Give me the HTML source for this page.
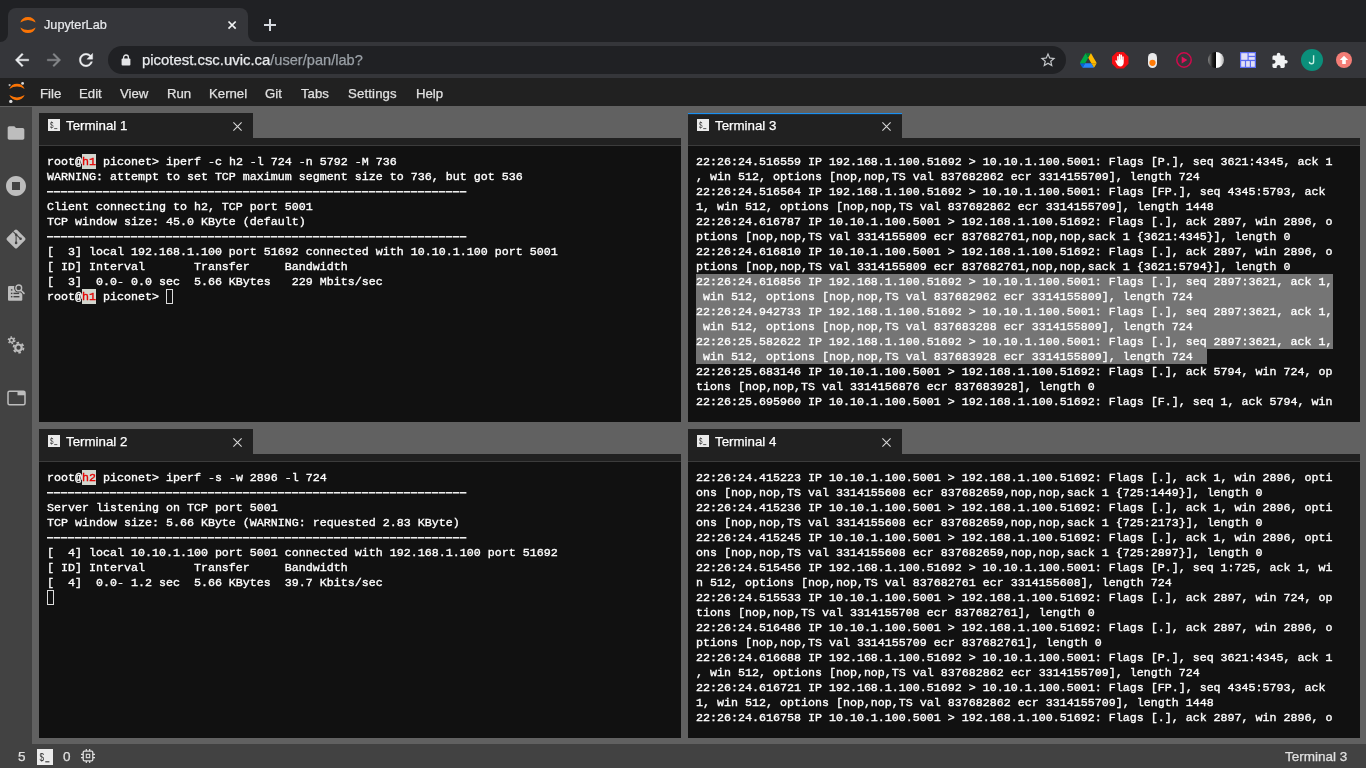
<!DOCTYPE html>
<html><head><meta charset="utf-8"><title>JupyterLab</title>
<style>
*{box-sizing:border-box;margin:0;padding:0}
html,body{width:1366px;height:768px;overflow:hidden;background:#616161;font-family:"Liberation Sans",sans-serif;}
.abs{position:absolute}
#tabstrip{left:0;top:0;width:1366px;height:42px;background:#202124}
#ctab{left:8px;top:8px;width:240px;height:34px;background:#35363a;border-radius:8px 8px 0 0}
#ctab .ttl{left:36px;top:10px;will-change:transform;-webkit-text-stroke:0.200px;font-size:12.700px;color:#e8eaed;white-space:nowrap}
#toolbar{left:0;top:42px;width:1366px;height:36px;background:#35363a}
#omni{left:108px;top:4px;width:958px;height:28px;border-radius:14px;background:#202124}
#url{left:34px;top:6px;will-change:transform;-webkit-text-stroke:0.250px;font-size:14.900px;color:#e8eaed;white-space:nowrap}
#url span{color:#9aa0a6;font-size:14.600px}
#menubar{left:0;top:78px;width:1366px;height:28px;background:#212121}
#menubar .m{top:8px;will-change:transform;-webkit-text-stroke:0.250px;font-size:13.200px;color:#e0e0e0;white-space:nowrap}
#sidebar{left:0;top:107px;width:32px;height:637px;background:#424242}
#status{left:0;top:744px;width:1366px;height:24px;background:#424242;color:#e0e0e0;font-size:13.5px}
.tab{height:25px;width:214px;background:#212121;color:#fff;font-size:13.5px}
.tab .lbl{left:26.500px;top:5px;will-change:transform;-webkit-text-stroke:0.250px;font-size:13.300px;white-space:nowrap}
.strip{height:7px;background:#212121}
.line{height:1px;background:#3c3c3c}
.term{background:#111;color:#fff;font-family:"Liberation Mono",monospace;font-size:11.667px;line-height:15px;overflow:hidden;font-weight:normal;-webkit-text-stroke:0.35px}
.term .in{position:absolute;left:8px;top:8px;will-change:transform}
.r{height:15px;line-height:16px;position:relative;white-space:pre}
.r b{position:relative;font-weight:inherit}
.sel{position:absolute;left:0;top:0;height:15px;background:#757575}
.hl{display:inline-block;height:15px;vertical-align:top;background:#d3d7cf;color:#e40000}
.cur{display:inline-block;width:7px;height:15px;border:1px solid #dcdcdc;vertical-align:top}

svg{position:absolute;overflow:visible}
.dash{position:absolute;left:0;top:7px;width:420px;height:2px;background:repeating-linear-gradient(90deg,rgba(17,17,17,0) 0,rgba(17,17,17,0) 6px,rgba(17,17,17,.6) 6px,rgba(17,17,17,.6) 7px),linear-gradient(#efefef 0,#efefef 50%,#909090 50%,#909090 100%)}
.st{will-change:transform;-webkit-text-stroke:0.250px;white-space:nowrap}
.gs{will-change:transform}
</style></head><body>
<div id="tabstrip" class="abs">
  <div id="ctab" class="abs">
    <svg style="left:12px;top:8.900px" width="16" height="16" viewBox="-8 -8 16 16"><path d="M-7.700,-2.400 A8.140,8.140 0 0 1 7.700,-2.400 A14.040,14.040 0 0 0 -7.700,-2.400Z" fill="#fa7405"/><path d="M-7.700,2.400 A8.140,8.140 0 0 0 7.700,2.400 A14.040,14.040 0 0 1 -7.700,2.400Z" fill="#fa7405"/></svg>
    <div class="ttl abs">JupyterLab</div>
    <svg style="left:219.900px;top:12.800px" width="8.200" height="8.200" viewBox="0 0 8.200 8.200"><path d="M0.500,0.500 L7.700,7.700 M7.700,0.500 L0.500,7.700" stroke="#f1f3f4" stroke-width="1.700" fill="none"/></svg>
  </div>
  <svg style="left:263.900px;top:18.900px" width="12" height="12" viewBox="0 0 12 12"><path d="M6,0V12M0,6H12" stroke="#d6dae0" stroke-width="2" fill="none"/></svg>
  <div class="abs" style="left:0;top:34px;width:8px;height:8px;background:#35363a"></div>
  <div class="abs" style="left:0;top:26px;width:8px;height:16px;background:#202124;border-radius:0 0 8px 0"></div>
  <div class="abs" style="left:248px;top:34px;width:8px;height:8px;background:#35363a"></div>
  <div class="abs" style="left:248px;top:26px;width:8px;height:16px;background:#202124;border-radius:0 0 0 8px"></div>
</div>
<div id="toolbar" class="abs">
  <svg style="left:12px;top:8px" width="20" height="20" viewBox="0 0 24 24"><path d="M20 11H7.83l5.59-5.59L12 4l-8 8 8 8 1.41-1.41L7.83 13H20v-2z" fill="#eceef0" stroke="#eceef0" stroke-width="0.500"/></svg>
  <svg style="left:44px;top:8px" width="20" height="20" viewBox="0 0 24 24"><path d="M12 4l-1.41 1.41L16.17 11H4v2h12.17l-5.58 5.59L12 20l8-8z" fill="#85878a" stroke="#85878a" stroke-width="0.500"/></svg>
  <svg style="left:76px;top:8px" width="20" height="20" viewBox="0 0 24 24"><path d="M17.65 6.35C16.2 4.9 14.21 4 12 4c-4.42 0-7.99 3.58-7.99 8s3.57 8 7.99 8c3.73 0 6.84-2.55 7.73-6h-2.08c-.82 2.33-3.04 4-5.65 4-3.31 0-6-2.69-6-6s2.69-6 6-6c1.66 0 3.14.69 4.22 1.78L13 11h7V4l-2.35 2.35z" fill="#eceef0" stroke="#eceef0" stroke-width="0.400"/></svg>
  <div id="omni" class="abs">
    <svg style="left:13px;top:8px" width="10" height="12" viewBox="0 0 10 12"><rect x="0.6" y="4.6" width="8.8" height="6.8" rx="1" fill="#e4e5e7"/><path d="M2.6,5V3.4a2.4,2.4 0 0 1 4.8,0V5" stroke="#e4e5e7" stroke-width="1.3" fill="none"/></svg>
    <div id="url" class="abs">picotest.csc.uvic.ca<span>/user/pan/lab?</span></div>
    <svg style="left:931px;top:5px" width="18" height="18" viewBox="0 0 24 24"><path d="M22 9.24l-7.19-.62L12 2 9.19 8.63 2 9.24l5.46 4.73L5.82 21 12 17.27 18.18 21l-1.63-7.03L22 9.24zM12 15.4l-3.76 2.27 1-4.28-3.32-2.88 4.38-.38L12 6.1l1.71 4.04 4.38.38-3.32 2.88 1 4.28L12 15.4z" fill="#c4c7ca"/></svg>
  </div>
  <!-- drive -->
  <svg style="left:1080px;top:10.5px" width="16.5" height="15" viewBox="0 0 87.3 78"><path d="M6.6 66.85l3.85 6.65c.8 1.4 1.95 2.5 3.3 3.3l13.75-23.8H0c0 1.55.4 3.1 1.2 4.5z" fill="#0066da"/><path d="M43.65 25L29.9 1.2c-1.35.8-2.5 1.9-3.3 3.3L1.2 48.5C.4 49.9 0 51.450 0 53h27.500z" fill="#00ac47"/><path d="M73.55 76.8c1.35-.8 2.5-1.900 3.3-3.3l1.6-2.75 7.65-13.25c.8-1.4 1.2-2.950 1.2-4.500H59.798l5.852 11.500z" fill="#f2b200"/><path d="M43.65 25L57.4 1.2C56.050.4 54.500 0 52.900 0H34.400c-1.600 0-3.150.45-4.500 1.200z" fill="#00832d"/><path d="M59.800 53H27.500L13.750 76.800c1.350.8 2.900 1.200 4.500 1.200h50.800c1.600 0 3.150-.45 4.500-1.200z" fill="#2684fc"/><path d="M73.400 26.500L60.700 4.500c-.8-1.400-1.950-2.500-3.300-3.300L43.650 25 59.800 53h27.450c0-1.550-.4-3.100-1.200-4.500z" fill="#ffba00"/></svg>
  <!-- adblock -->
  <svg style="left:1112px;top:10px" width="16.5" height="16.5" viewBox="0 0 24 24"><path d="M7.03,0 H16.97 L24,7.03 V16.97 L16.970,24 H7.03 L0,16.97 V7.03Z" fill="#f40d12"/><path d="M8.200,13.8 V7.6 a0.9,0.9 0 0 1 1.800,0 V11 h0.3 V5.400 a0.9,0.9 0 0 1 1.800,0 V11 h0.3 V6 a0.9,0.9 0 0 1 1.800,0 V11.500 h0.3 V8 a0.9,0.9 0 0 1 1.800,0 V14.500 c0,3.200 -1.700,5.200 -4.200,5.200 c-2.200,0 -3.300,-1.200 -4.300,-3 L6,13.300 c-0.500,-1 0.800,-1.800 1.500,-0.900Z" fill="#fff" transform="translate(12 12.500) scale(1.180) translate(-12 -12.500)"/></svg>
  <!-- pill -->
  <svg style="left:1147.500px;top:10.5px" width="9" height="15" viewBox="0 0 9 15"><rect x="0" y="0" width="9" height="15" rx="4.500" fill="#e9e9ea"/><circle cx="4.500" cy="9.800" r="3.100" fill="#ff7a05"/></svg>
  <!-- play ring -->
  <svg style="left:1176px;top:10px" width="16" height="16" viewBox="0 0 16 16"><circle cx="8" cy="8" r="7.2" fill="none" stroke="#cf0a4c" stroke-width="1.500"/><path d="M5.700,4.500 L11.400,8 L5.700,11.500Z" fill="#e0105a"/></svg>
  <!-- half -->
  <svg style="left:1208px;top:10px" width="16" height="16" viewBox="0 0 16 16"><defs><linearGradient id="hg" x1="0" x2="1"><stop offset="0" stop-color="#8a8a8a"/><stop offset="0.550" stop-color="#222"/><stop offset="1" stop-color="#000"/></linearGradient><linearGradient id="hw" x1="0" x2="1"><stop offset="0" stop-color="#fff"/><stop offset="0.500" stop-color="#f4f4f4"/><stop offset="1" stop-color="#aaa"/></linearGradient></defs><path d="M8,0 A8,8 0 0 0 8,16Z" fill="url(#hg)"/><path d="M8,0 A8,8 0 0 1 8,16Z" fill="url(#hw)"/></svg>
  <!-- grid -->
  <svg style="left:1240px;top:10px" width="16" height="16" viewBox="0 0 16 16"><rect width="16" height="16" fill="#5b6cf2"/><rect x="1.200" y="1.200" width="6.300" height="6.600" fill="#e1dff6"/><rect x="8.700" y="1.200" width="6.100" height="2.600" fill="#e1dff6"/><rect x="8.700" y="5.100" width="6.100" height="2.700" fill="#e1dff6"/><rect x="1.200" y="9.100" width="3.700" height="5.700" fill="#e1dff6"/><rect x="6.100" y="9.100" width="3.700" height="5.700" fill="#e1dff6"/><rect x="11" y="9.100" width="3.800" height="5.700" fill="#e1dff6"/></svg>
  <!-- puzzle -->
  <svg style="left:1271.300px;top:9.6px" width="17.400" height="17.400" viewBox="0 0 24 24"><path d="M20.500 11H19V7c0-1.100-.9-2-2-2h-4V3.500C13 2.120 11.880 1 10.500 1S8 2.120 8 3.500V5H4c-1.100 0-1.990.9-1.990 2v3.800H3.500c1.490 0 2.700 1.210 2.700 2.700s-1.210 2.700-2.700 2.700H2V20c0 1.100.9 2 2 2h3.800v-1.500c0-1.490 1.210-2.700 2.700-2.700 1.490 0 2.700 1.210 2.700 2.700V22H17c1.100 0 2-.9 2-2v-4h1.500c1.380 0 2.500-1.120 2.500-2.500S21.880 11 20.500 11z" fill="#f1f3f4"/></svg>
  <!-- avatar -->
  <div class="abs" style="left:1301px;top:7px;width:22px;height:22px;border-radius:11px;background:#0b8f7b"></div>
  <svg style="left:1307px;top:12px" width="10" height="12" viewBox="0 0 10 12"><path d="M6.600,1.200 V7.600 a2.100,2.100 0 0 1 -4.200,0.200" stroke="#c6f0e2" stroke-width="1.400" fill="none"/></svg>
  <!-- update -->
  <div class="abs" style="left:1336px;top:10px;width:16px;height:16px;border-radius:8px;background:#f47d76"></div>
  <svg style="left:1339px;top:13px" width="10" height="10" viewBox="0 0 10 10"><path d="M5,0.800 L9.200,5 H6.800 V9 H3.200 V5 H0.800Z" fill="#fff"/></svg>
</div>
<div id="menubar" class="abs">
  <svg style="left:6.800px;top:1.850px" width="20" height="24" viewBox="-10 -12 20 24"><path d="M-7.650,-3.100 A8.250,8.250 0 0 1 7.650,-3.100 A14.100,14.100 0 0 0 -7.650,-3.100Z" fill="#fa7405"/><path d="M-7.650,3.100 A8.250,8.250 0 0 0 7.650,3.100 A14.100,14.100 0 0 1 -7.650,3.100Z" fill="#fa7405"/><circle cx="-7.400" cy="-6.950" r="1.100" fill="#b5b5b5"/><circle cx="5.600" cy="-8.550" r="1.400" fill="#dcdcdc"/><circle cx="-6.200" cy="9.400" r="1.700" fill="#dcdcdc"/></svg>
  <div class="m abs" style="left:40px">File</div>
  <div class="m abs" style="left:79px">Edit</div>
  <div class="m abs" style="left:120px">View</div>
  <div class="m abs" style="left:167px">Run</div>
  <div class="m abs" style="left:209px">Kernel</div>
  <div class="m abs" style="left:265px">Git</div>
  <div class="m abs" style="left:301px">Tabs</div>
  <div class="m abs" style="left:347.500px;letter-spacing:0.150px">Settings</div>
  <div class="m abs" style="left:415.500px">Help</div>
</div>
<div id="sidebar" class="abs">
  <!-- folder -->
  <svg style="left:6px;top:16px" width="20" height="20" viewBox="0 0 24 24"><path d="M10 4H4c-1.100 0-1.990.9-1.990 2L2 18c0 1.100.9 2 2 2h16c1.100 0 2-.9 2-2V8c0-1.100-.9-2-2-2h-8l-2-2z" fill="#bdbdbd"/></svg>
  <!-- running -->
  <svg style="left:4px;top:66.800px" width="24" height="24" viewBox="0 0 24 24"><path d="M12 2C6.480 2 2 6.480 2 12s4.480 10 10 10 10-4.480 10-10S17.520 2 12 2zm4 14H8V8h8v8z" fill="#bdbdbd"/><rect x="9.200" y="9.200" width="5.600" height="5.600" fill="#bdbdbd" opacity="0"/></svg>
  <!-- git -->
  <svg style="left:5px;top:121px" width="22" height="22" viewBox="-11 -11 22 22"><rect x="-7.200" y="-7.200" width="14.400" height="14.400" rx="1.700" transform="rotate(45)" fill="#bdbdbd"/><path d="M-2.800,-7.300 L4.600,-0.200 M0.100,-4.300 V3.900" stroke="#424242" stroke-width="1.050" fill="none"/><circle cx="0.100" cy="-4.300" r="1.250" fill="#424242"/><circle cx="4.600" cy="-0.200" r="1.300" fill="#424242"/><circle cx="0.100" cy="3.900" r="1.300" fill="#424242"/></svg>
  <!-- notebook search -->
  <svg style="left:7px;top:176.500px" width="18" height="18" viewBox="0 0 18 18"><rect x="1" y="2.100" width="14.300" height="14.700" rx="1.100" fill="#bdbdbd"/><g fill="#424242"><rect x="3.900" y="5.200" width="1.500" height="1.400"/><rect x="3.900" y="8.700" width="1.500" height="1.400"/><rect x="6.500" y="8.700" width="5.600" height="1.400"/><rect x="3.900" y="12" width="1.500" height="1.400"/><rect x="6.500" y="12" width="5.900" height="1.400"/></g><circle cx="11.750" cy="3.900" r="4.700" fill="#424242"/><path d="M13.600,5.900L17.300,9.600" stroke="#424242" stroke-width="3.600"/><circle cx="11.750" cy="3.900" r="2.900" fill="#424242" stroke="#bdbdbd" stroke-width="1.400"/><path d="M13.900,6.300L17,9.400" stroke="#bdbdbd" stroke-width="1.600" stroke-linecap="round"/></svg>
  <!-- gears -->
  <svg style="left:7px;top:229px" width="18" height="18" viewBox="0 0 18 18"><g fill="none" stroke="#bdbdbd"><circle cx="4.600" cy="4.300" r="2" stroke-width="1.500"/><circle cx="4.600" cy="4.300" r="3.300" stroke-width="1.300" stroke-dasharray="1.730 1.730"/><circle cx="11.500" cy="11.700" r="3.200" stroke-width="2.200"/><circle cx="11.500" cy="11.700" r="5" stroke-width="1.800" stroke-dasharray="2.620 2.620"/></g></svg>
  <!-- tabs -->
  <svg style="left:6.600px;top:283px" width="19" height="16" viewBox="0 0 19 16"><rect x="1" y="1.300" width="17" height="13.400" rx="1.500" fill="none" stroke="#bdbdbd" stroke-width="1.500"/><path d="M10.500,1.300H18V5.300H10.500Z" fill="#bdbdbd"/></svg>
</div>

<!-- panel 1 -->
<div class="tab abs" style="left:39px;top:113px"><svg style="left:9px;top:6px" width="12" height="12" viewBox="0 0 12 12" class="gs"><rect width="12" height="12" fill="#ebebeb"/><text x="0" y="0" transform="translate(1.900 9.300) scale(0.720 1)" font-family="Liberation Sans" font-size="8.600" fill="#2e2e2e">$</text><path d="M6.200,9.600H9.300" stroke="#3a3a3a" stroke-width="0.850"/></svg><div class="lbl abs">Terminal 1</div><svg style="left:193.500px;top:8.500px" width="9" height="9" viewBox="0 0 9 9"><path d="M0.400,0.400L8.600,8.600M8.600,0.400L0.400,8.600" stroke="#d8d8d8" stroke-width="1.100" fill="none"/></svg></div>
<div class="strip abs" style="left:39px;top:138px;width:642px"></div>
<div class="line abs" style="left:39px;top:145px;width:642px"></div>
<div class="term abs" style="left:39px;top:146px;width:642px;height:276px"><div class="in">
<div class="r">root@<span class="hl">h1</span> piconet&gt; iperf -c h2 -l 724 -n 5792 -M 736</div>
<div class="r">WARNING: attempt to set TCP maximum segment size to 736, but got 536</div>
<div class="r"><i class="dash"></i></div>
<div class="r">Client connecting to h2, TCP port 5001</div>
<div class="r">TCP window size: 45.0 KByte (default)</div>
<div class="r"><i class="dash"></i></div>
<div class="r">[  3] local 192.168.1.100 port 51692 connected with 10.10.1.100 port 5001</div>
<div class="r">[ ID] Interval       Transfer     Bandwidth</div>
<div class="r">[  3]  0.0- 0.0 sec  5.66 KBytes   229 Mbits/sec</div>
<div class="r">root@<span class="hl">h1</span> piconet&gt; <span class="cur"></span></div>
</div></div>
<!-- panel 2 -->
<div class="tab abs" style="left:39px;top:429px"><svg style="left:9px;top:6px" width="12" height="12" viewBox="0 0 12 12" class="gs"><rect width="12" height="12" fill="#ebebeb"/><text x="0" y="0" transform="translate(1.900 9.300) scale(0.720 1)" font-family="Liberation Sans" font-size="8.600" fill="#2e2e2e">$</text><path d="M6.200,9.600H9.300" stroke="#3a3a3a" stroke-width="0.850"/></svg><div class="lbl abs">Terminal 2</div><svg style="left:193.500px;top:8.500px" width="9" height="9" viewBox="0 0 9 9"><path d="M0.400,0.400L8.600,8.600M8.600,0.400L0.400,8.600" stroke="#d8d8d8" stroke-width="1.100" fill="none"/></svg></div>
<div class="strip abs" style="left:39px;top:454px;width:642px"></div>
<div class="line abs" style="left:39px;top:461px;width:642px"></div>
<div class="term abs" style="left:39px;top:462px;width:642px;height:276px"><div class="in">
<div class="r">root@<span class="hl">h2</span> piconet&gt; iperf -s -w 2896 -l 724</div>
<div class="r"><i class="dash"></i></div>
<div class="r">Server listening on TCP port 5001</div>
<div class="r">TCP window size: 5.66 KByte (WARNING: requested 2.83 KByte)</div>
<div class="r"><i class="dash"></i></div>
<div class="r">[  4] local 10.10.1.100 port 5001 connected with 192.168.1.100 port 51692</div>
<div class="r">[ ID] Interval       Transfer     Bandwidth</div>
<div class="r">[  4]  0.0- 1.2 sec  5.66 KBytes  39.7 Kbits/sec</div>
<div class="r"><span class="cur"></span></div>
</div></div>
<!-- panel 3 -->
<div class="tab abs" style="left:688px;top:113px"><div class="abs" style="left:0;top:0;width:214px;height:1px;background:#1a90f2"></div><div class="abs" style="left:0;top:1px;width:214px;height:1px;background:rgba(30,136,229,.15)"></div><svg style="left:9px;top:6px" width="12" height="12" viewBox="0 0 12 12" class="gs"><rect width="12" height="12" fill="#ebebeb"/><text x="0" y="0" transform="translate(1.900 9.300) scale(0.720 1)" font-family="Liberation Sans" font-size="8.600" fill="#2e2e2e">$</text><path d="M6.200,9.600H9.300" stroke="#3a3a3a" stroke-width="0.850"/></svg><div class="lbl abs">Terminal 3</div><svg style="left:193.500px;top:8.500px" width="9" height="9" viewBox="0 0 9 9"><path d="M0.400,0.400L8.600,8.600M8.600,0.400L0.400,8.600" stroke="#d8d8d8" stroke-width="1.100" fill="none"/></svg></div>
<div class="strip abs" style="left:688px;top:138px;width:672px"></div>
<div class="line abs" style="left:688px;top:145px;width:672px"></div>
<div class="term abs" style="left:688px;top:146px;width:672px;height:276px"><div class="in">
<div class="r">22:26:24.516559 IP 192.168.1.100.51692 &gt; 10.10.1.100.5001: Flags [P.], seq 3621:4345, ack 1</div>
<div class="r">, win 512, options [nop,nop,TS val 837682862 ecr 3314155709], length 724</div>
<div class="r">22:26:24.516564 IP 192.168.1.100.51692 &gt; 10.10.1.100.5001: Flags [FP.], seq 4345:5793, ack</div>
<div class="r">1, win 512, options [nop,nop,TS val 837682862 ecr 3314155709], length 1448</div>
<div class="r">22:26:24.616787 IP 10.10.1.100.5001 &gt; 192.168.1.100.51692: Flags [.], ack 2897, win 2896, o</div>
<div class="r">ptions [nop,nop,TS val 3314155809 ecr 837682761,nop,nop,sack 1 {3621:4345}], length 0</div>
<div class="r">22:26:24.616810 IP 10.10.1.100.5001 &gt; 192.168.1.100.51692: Flags [.], ack 2897, win 2896, o</div>
<div class="r">ptions [nop,nop,TS val 3314155809 ecr 837682761,nop,nop,sack 1 {3621:5794}], length 0</div>
<div class="r"><i class="sel" style="width:637px"></i><b>22:26:24.616856 IP 192.168.1.100.51692 &gt; 10.10.1.100.5001: Flags [.], seq 2897:3621, ack 1,</b></div>
<div class="r"><i class="sel" style="width:637px"></i><b> win 512, options [nop,nop,TS val 837682962 ecr 3314155809], length 724</b></div>
<div class="r"><i class="sel" style="width:637px"></i><b>22:26:24.942733 IP 192.168.1.100.51692 &gt; 10.10.1.100.5001: Flags [.], seq 2897:3621, ack 1,</b></div>
<div class="r"><i class="sel" style="width:637px"></i><b> win 512, options [nop,nop,TS val 837683288 ecr 3314155809], length 724</b></div>
<div class="r"><i class="sel" style="width:637px"></i><b>22:26:25.582622 IP 192.168.1.100.51692 &gt; 10.10.1.100.5001: Flags [.], seq 2897:3621, ack 1,</b></div>
<div class="r"><i class="sel" style="width:511px"></i><b> win 512, options [nop,nop,TS val 837683928 ecr 3314155809], length 724</b></div>
<div class="r">22:26:25.683146 IP 10.10.1.100.5001 &gt; 192.168.1.100.51692: Flags [.], ack 5794, win 724, op</div>
<div class="r">tions [nop,nop,TS val 3314156876 ecr 837683928], length 0</div>
<div class="r">22:26:25.695960 IP 10.10.1.100.5001 &gt; 192.168.1.100.51692: Flags [F.], seq 1, ack 5794, win</div>
</div></div>
<!-- panel 4 -->
<div class="tab abs" style="left:688px;top:429px"><svg style="left:9px;top:6px" width="12" height="12" viewBox="0 0 12 12" class="gs"><rect width="12" height="12" fill="#ebebeb"/><text x="0" y="0" transform="translate(1.900 9.300) scale(0.720 1)" font-family="Liberation Sans" font-size="8.600" fill="#2e2e2e">$</text><path d="M6.200,9.600H9.300" stroke="#3a3a3a" stroke-width="0.850"/></svg><div class="lbl abs">Terminal 4</div><svg style="left:193.500px;top:8.500px" width="9" height="9" viewBox="0 0 9 9"><path d="M0.400,0.400L8.600,8.600M8.600,0.400L0.400,8.600" stroke="#d8d8d8" stroke-width="1.100" fill="none"/></svg></div>
<div class="strip abs" style="left:688px;top:454px;width:672px"></div>
<div class="line abs" style="left:688px;top:461px;width:672px"></div>
<div class="term abs" style="left:688px;top:462px;width:672px;height:276px"><div class="in">
<div class="r">22:26:24.415223 IP 10.10.1.100.5001 &gt; 192.168.1.100.51692: Flags [.], ack 1, win 2896, opti</div>
<div class="r">ons [nop,nop,TS val 3314155608 ecr 837682659,nop,nop,sack 1 {725:1449}], length 0</div>
<div class="r">22:26:24.415236 IP 10.10.1.100.5001 &gt; 192.168.1.100.51692: Flags [.], ack 1, win 2896, opti</div>
<div class="r">ons [nop,nop,TS val 3314155608 ecr 837682659,nop,nop,sack 1 {725:2173}], length 0</div>
<div class="r">22:26:24.415245 IP 10.10.1.100.5001 &gt; 192.168.1.100.51692: Flags [.], ack 1, win 2896, opti</div>
<div class="r">ons [nop,nop,TS val 3314155608 ecr 837682659,nop,nop,sack 1 {725:2897}], length 0</div>
<div class="r">22:26:24.515456 IP 192.168.1.100.51692 &gt; 10.10.1.100.5001: Flags [P.], seq 1:725, ack 1, wi</div>
<div class="r">n 512, options [nop,nop,TS val 837682761 ecr 3314155608], length 724</div>
<div class="r">22:26:24.515533 IP 10.10.1.100.5001 &gt; 192.168.1.100.51692: Flags [.], ack 2897, win 724, op</div>
<div class="r">tions [nop,nop,TS val 3314155708 ecr 837682761], length 0</div>
<div class="r">22:26:24.516486 IP 10.10.1.100.5001 &gt; 192.168.1.100.51692: Flags [.], ack 2897, win 2896, o</div>
<div class="r">ptions [nop,nop,TS val 3314155709 ecr 837682761], length 0</div>
<div class="r">22:26:24.616688 IP 192.168.1.100.51692 &gt; 10.10.1.100.5001: Flags [P.], seq 3621:4345, ack 1</div>
<div class="r">, win 512, options [nop,nop,TS val 837682862 ecr 3314155709], length 724</div>
<div class="r">22:26:24.616721 IP 192.168.1.100.51692 &gt; 10.10.1.100.5001: Flags [FP.], seq 4345:5793, ack</div>
<div class="r">1, win 512, options [nop,nop,TS val 837682862 ecr 3314155709], length 1448</div>
<div class="r">22:26:24.616758 IP 10.10.1.100.5001 &gt; 192.168.1.100.51692: Flags [.], ack 2897, win 2896, o</div>
</div></div>

<div id="status" class="abs">
  <div class="abs st" style="left:18.100px;top:5px">5</div>
  <svg style="left:37px;top:5px" width="16" height="16" viewBox="0 0 12 12" class="gs"><rect width="12" height="12" fill="#ebebeb"/><text x="0" y="0" transform="translate(1.900 9.300) scale(0.720 1)" font-family="Liberation Sans" font-size="8.600" fill="#2e2e2e">$</text><path d="M6.200,9.600H9.300" stroke="#3a3a3a" stroke-width="0.850"/></svg>
  <div class="abs st" style="left:62.500px;top:5px">0</div>
  <svg style="left:80px;top:4px" width="16" height="16" viewBox="0 0 16 16"><rect x="3.200" y="3.200" width="9.600" height="9.600" rx="1.200" fill="none" stroke="#e0e0e0" stroke-width="1.300"/><rect x="6.300" y="6.300" width="3.400" height="3.400" fill="none" stroke="#e0e0e0" stroke-width="1.100"/><path d="M6.300,1V3M9.700,1V3M6.300,13V15M9.700,13V15M1,6.300H3M1,9.700H3M13,6.300H15M13,9.700H15" stroke="#e0e0e0" stroke-width="1.200"/></svg>
  <div class="abs st" style="right:18.500px;top:4.500px">Terminal 3</div>
</div>
</body></html>
